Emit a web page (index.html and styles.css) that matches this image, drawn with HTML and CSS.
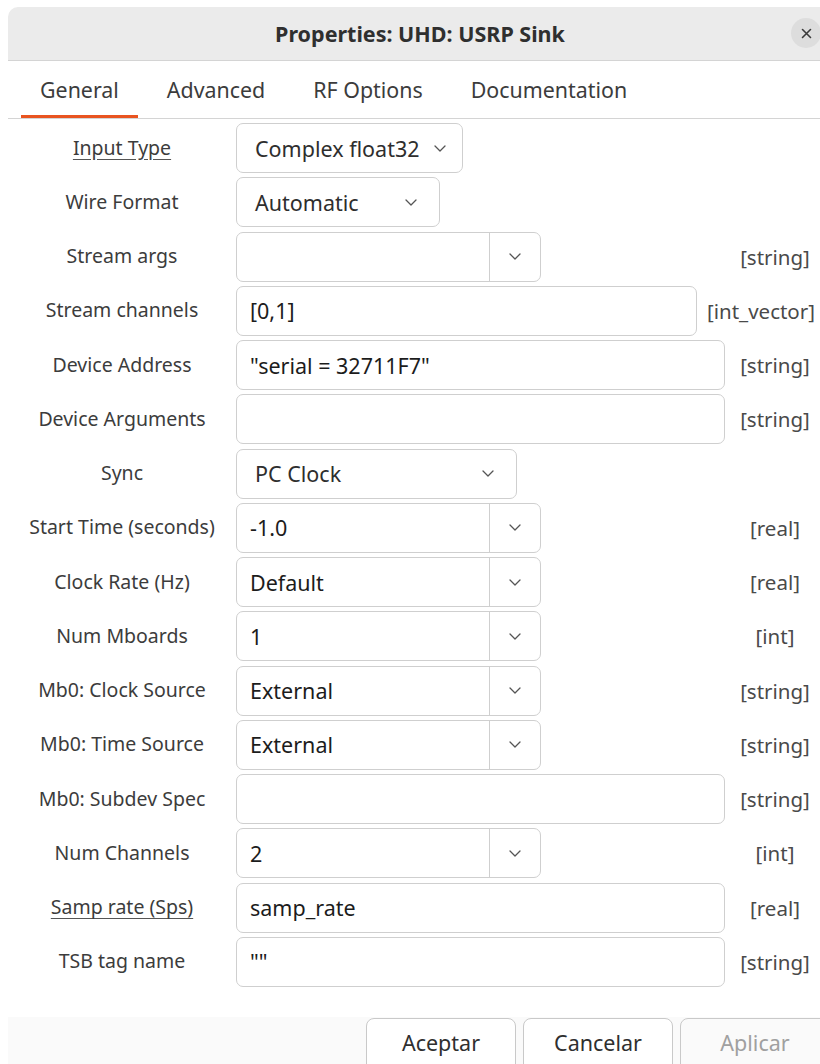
FILE: index.html
```html
<!DOCTYPE html>
<html lang="es">
<head>
<meta charset="utf-8">
<title>Properties: UHD: USRP Sink</title>
<link rel="stylesheet" href="styles.css">
</head>
<body>
<div class="window">
  <header class="titlebar">
    <span class="title">Properties: UHD: USRP Sink</span>
    <button class="close" aria-label="Close">
      <svg width="11" height="11" viewBox="0 0 11 11"><path d="M1.5 1.5 L9.5 9.5 M9.5 1.5 L1.5 9.5" stroke="#3a3a3a" stroke-width="1.6" stroke-linecap="round"/></svg>
    </button>
  </header>

  <nav class="tabs">
    <span class="tab active">General</span>
    <span class="tab">Advanced</span>
    <span class="tab">RF Options</span>
    <span class="tab">Documentation</span>
  </nav>

  <main class="form">
    <div class="row">
      <span class="name"><u>Input Type</u></span>
      <div class="combo w-input"><span class="val">Complex float32</span><svg class="chev" viewBox="0 0 12 7"><path d="M1 1 L6 6 L11 1"/></svg></div>
    </div>
    <div class="row">
      <span class="name">Wire Format</span>
      <div class="combo w-wire"><span class="val">Automatic</span><svg class="chev" viewBox="0 0 12 7"><path d="M1 1 L6 6 L11 1"/></svg></div>
    </div>
    <div class="row">
      <span class="name">Stream args</span>
      <div class="centry"><span class="text"></span><span class="drop"><svg class="chev" viewBox="0 0 12 7"><path d="M1 1 L6 6 L11 1"/></svg></span></div>
      <span class="spacer"></span>
      <span class="type">[string]</span>
    </div>
    <div class="row">
      <span class="name">Stream channels</span>
      <div class="entry">[0,1]</div>
      <span class="type">[int_vector]</span>
    </div>
    <div class="row">
      <span class="name">Device Address</span>
      <div class="entry">"serial = 32711F7"</div>
      <span class="type">[string]</span>
    </div>
    <div class="row">
      <span class="name">Device Arguments</span>
      <div class="entry"></div>
      <span class="type">[string]</span>
    </div>
    <div class="row">
      <span class="name">Sync</span>
      <div class="combo w-sync"><span class="val">PC Clock</span><svg class="chev" viewBox="0 0 12 7"><path d="M1 1 L6 6 L11 1"/></svg></div>
    </div>
    <div class="row">
      <span class="name">Start Time (seconds)</span>
      <div class="centry"><span class="text">-1.0</span><span class="drop"><svg class="chev" viewBox="0 0 12 7"><path d="M1 1 L6 6 L11 1"/></svg></span></div>
      <span class="spacer"></span>
      <span class="type">[real]</span>
    </div>
    <div class="row">
      <span class="name">Clock Rate (Hz)</span>
      <div class="centry"><span class="text">Default</span><span class="drop"><svg class="chev" viewBox="0 0 12 7"><path d="M1 1 L6 6 L11 1"/></svg></span></div>
      <span class="spacer"></span>
      <span class="type">[real]</span>
    </div>
    <div class="row">
      <span class="name">Num Mboards</span>
      <div class="centry"><span class="text">1</span><span class="drop"><svg class="chev" viewBox="0 0 12 7"><path d="M1 1 L6 6 L11 1"/></svg></span></div>
      <span class="spacer"></span>
      <span class="type">[int]</span>
    </div>
    <div class="row">
      <span class="name">Mb0: Clock Source</span>
      <div class="centry"><span class="text">External</span><span class="drop"><svg class="chev" viewBox="0 0 12 7"><path d="M1 1 L6 6 L11 1"/></svg></span></div>
      <span class="spacer"></span>
      <span class="type">[string]</span>
    </div>
    <div class="row">
      <span class="name">Mb0: Time Source</span>
      <div class="centry"><span class="text">External</span><span class="drop"><svg class="chev" viewBox="0 0 12 7"><path d="M1 1 L6 6 L11 1"/></svg></span></div>
      <span class="spacer"></span>
      <span class="type">[string]</span>
    </div>
    <div class="row">
      <span class="name">Mb0: Subdev Spec</span>
      <div class="entry"></div>
      <span class="type">[string]</span>
    </div>
    <div class="row">
      <span class="name">Num Channels</span>
      <div class="centry"><span class="text">2</span><span class="drop"><svg class="chev" viewBox="0 0 12 7"><path d="M1 1 L6 6 L11 1"/></svg></span></div>
      <span class="spacer"></span>
      <span class="type">[int]</span>
    </div>
    <div class="row">
      <span class="name"><u>Samp rate (Sps)</u></span>
      <div class="entry">samp_rate</div>
      <span class="type">[real]</span>
    </div>
    <div class="row">
      <span class="name">TSB tag name</span>
      <div class="entry">""</div>
      <span class="type">[string]</span>
    </div>
  </main>

  <footer class="actions">
    <button class="btn">Aceptar</button>
    <button class="btn">Cancelar</button>
    <button class="btn" disabled>Aplicar</button>
  </footer>
</div>
</body>
</html>
```

FILE: styles.css
```css
html, body {
  margin: 0;
  padding: 0;
  background: #ffffff;
  overflow: hidden;
}

body {
  font-family: "Noto Sans", "DejaVu Sans", sans-serif;
  font-size: 19.5px;
  color: #3c3c3c;
  width: 820px;
  height: 1064px;
}

.window {
  margin: 7px 0 0 8px;
  width: 824px;
  background: #ffffff;
  border-radius: 10px 10px 0 0;
  overflow: hidden;
}

/* ---- title bar ---- */
.titlebar {
  height: 53px;
  background: #ebebeb;
  border-bottom: 1px solid #d4d4d4;
  display: flex;
  align-items: center;
  justify-content: center;
  position: relative;
}

.title {
  font-weight: 700;
  font-size: 21.5px;
  color: #2f2f2f;
}

.close {
  position: absolute;
  right: 11px;
  top: 11px;
  width: 30px;
  height: 30px;
  border-radius: 50%;
  border: none;
  background: #dddddd;
  padding: 0;
  display: flex;
  align-items: center;
  justify-content: center;
}

/* ---- notebook tabs ---- */
.tabs {
  height: 57px;
  border-bottom: 1px solid #d4d4d4;
  display: flex;
  padding-left: 8px;
}

.tab {
  box-sizing: border-box;
  height: 57px;
  padding: 14px 19px 0;
  margin: 0 5px;
  color: #3c3c3c;
  font-size: 21.4px;
  border-bottom: 3px solid transparent;
}

.tab.active {
  border-bottom-color: #e95420;
}

/* ---- parameter grid ---- */
.form {
  display: flex;
  flex-direction: column;
  row-gap: 4.27px;
  padding: 4px 17px 30px 0;
}

.row {
  display: flex;
  align-items: center;
  height: 50px;
}

.name {
  width: 228px;
  flex: none;
  text-align: center;
  color: #3c3c3c;
  padding-bottom: 2px;
}

.name u {
  text-decoration-color: #555;
  text-underline-offset: 4px;
}

.combo,
.centry,
.entry {
  box-sizing: border-box;
  height: 50px;
  border: 1px solid #cfcfcf;
  border-radius: 7px;
  background: #ffffff;
  font-size: 21.5px;
}

.combo {
  display: flex;
  align-items: center;
  justify-content: space-between;
  padding: 0 22px 0 18px;
  color: #2e2e2e;
}

.w-input { width: 227px; padding-right: 16px; }
.w-wire  { width: 204px; }
.w-sync  { width: 281px; }

.chev {
  width: 12px;
  height: 7px;
  fill: none;
  stroke: #555555;
  stroke-width: 1.3;
  stroke-linecap: round;
  stroke-linejoin: round;
}

.centry {
  width: 305px;
  flex: none;
  display: flex;
}

.centry .text {
  flex: 1;
  display: flex;
  align-items: center;
  padding-left: 13px;
  color: #1c1c1c;
}

.centry .drop {
  width: 50px;
  border-left: 1px solid #cfcfcf;
  display: flex;
  align-items: center;
  justify-content: center;
}

.entry {
  flex: 1;
  display: flex;
  align-items: center;
  padding-left: 13px;
  color: #1c1c1c;
}

.spacer {
  flex: 1;
}

.type {
  flex: none;
  min-width: 80px;
  margin-left: 10px;
  text-align: center;
  color: #4a4a4a;
  font-size: 20.5px;
}

/* ---- dialog buttons ---- */
.actions {
  background: #fafafa;
  height: 60px;
  display: flex;
  justify-content: flex-end;
  gap: 7px;
  padding: 1px 2px 0 0;
}

.btn {
  box-sizing: border-box;
  width: 150px;
  height: 54px;
  border: 1px solid #c9c9c9;
  border-radius: 8px;
  background: #ffffff;
  font-family: inherit;
  font-size: 21.5px;
  color: #2f2f2f;
  padding: 0 0 4px;
}

.btn:disabled {
  color: #a0a0a0;
  background: #fafafa;
}
```
